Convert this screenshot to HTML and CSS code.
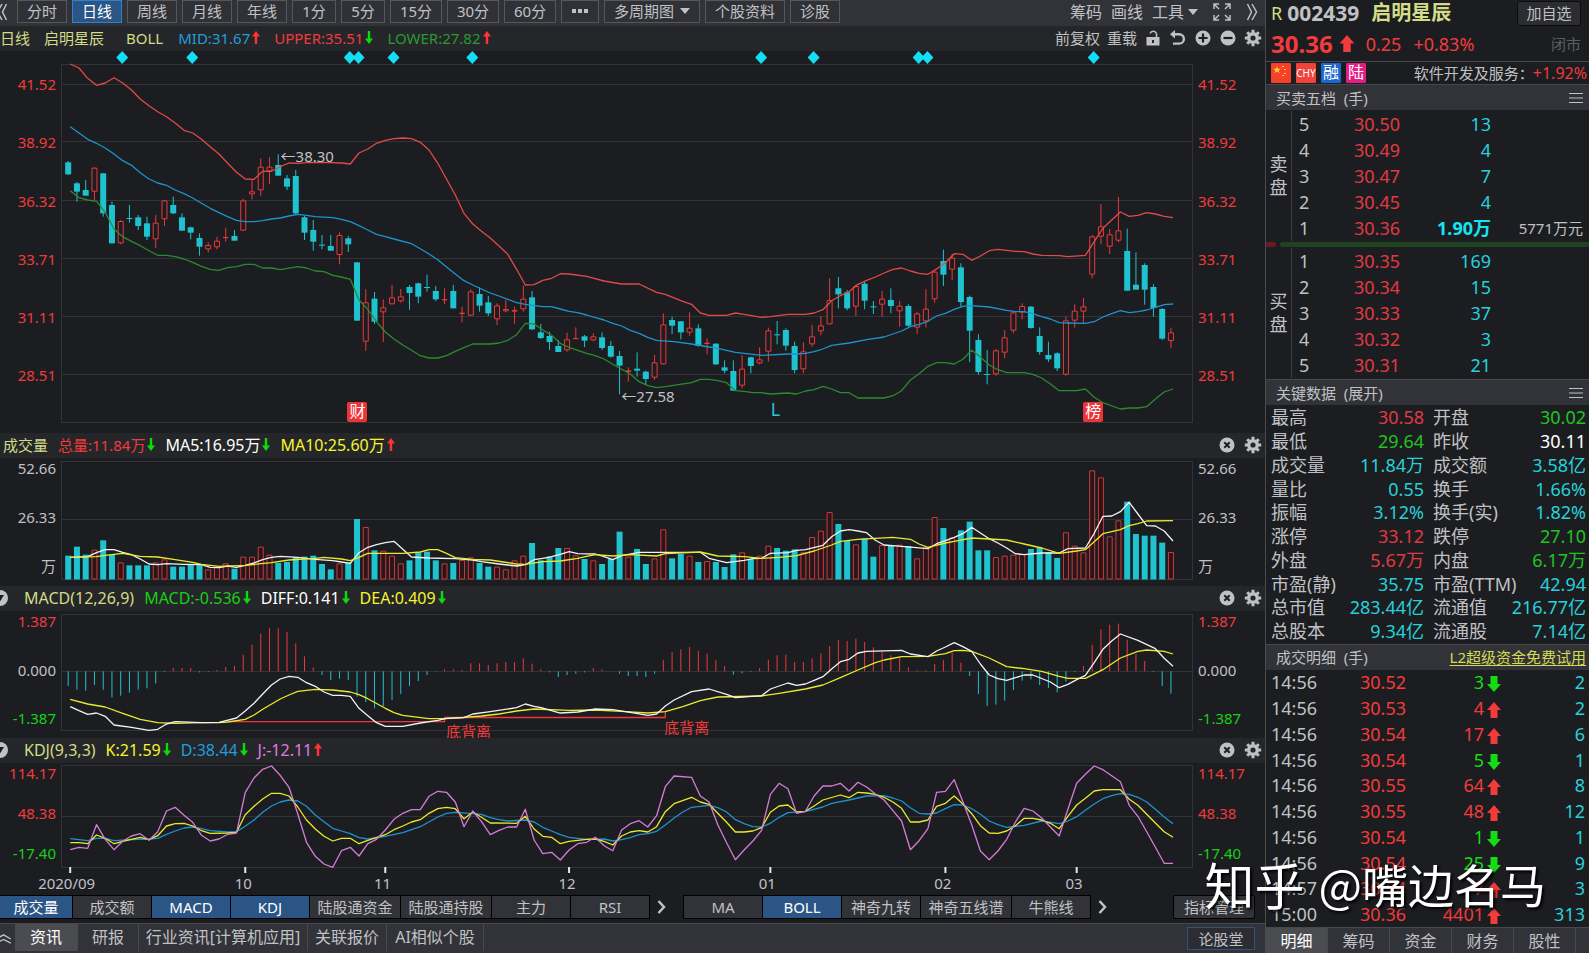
FILE: index.html
```html
<!DOCTYPE html>
<html lang="zh-CN">
<head>
<meta charset="utf-8">
<title>启明星辰 002439</title>
<link rel="stylesheet" href="styles.css">
</head>
<body>
<svg class="defs" aria-hidden="true">
  <symbol id="gear" viewBox="0 0 18 18"><circle cx="9" cy="9" r="4.3" fill="none" stroke="currentColor" stroke-width="3.4"/><path d="M9 .8v3M9 14.2v3M.8 9h3M14.2 9h3M3.2 3.2l2.1 2.1M12.7 12.7l2.1 2.1M3.2 14.8l2.1-2.1M12.7 5.3l2.1-2.1" stroke="currentColor" stroke-width="3"/></symbol>
  <symbol id="close" viewBox="0 0 18 18"><circle cx="9" cy="9" r="7.5" fill="currentColor"/><path d="M6.3 6.3l5.4 5.4M11.7 6.3l-5.4 5.4" stroke="#1c1d21" stroke-width="2"/></symbol>
  <symbol id="plus" viewBox="0 0 18 18"><circle cx="9" cy="9" r="7.5" fill="currentColor"/><path d="M9 4.5v9M4.5 9h9" stroke="#1c1d21" stroke-width="2.2"/></symbol>
  <symbol id="minus" viewBox="0 0 18 18"><circle cx="9" cy="9" r="7.5" fill="currentColor"/><path d="M4.5 9h9" stroke="#1c1d21" stroke-width="2.2"/></symbol>
  <symbol id="undo" viewBox="0 0 18 18"><path d="M3 5.2h7.2a4.7 4.7 0 0 1 0 9.4H4" fill="none" stroke="currentColor" stroke-width="2.4"/><path d="M1 5.2L6 1v8.4z" fill="currentColor"/></symbol>
  <symbol id="lock" viewBox="0 0 18 18"><path d="M2.500 8h13v8.500h-13zM8 11v3h2v-3z" fill="currentColor" fill-rule="evenodd"/><path d="M6 4.500a3.500 3.500 0 0 1 6.500 0V8" fill="none" stroke="currentColor" stroke-width="1.500"/></symbol>
  <symbol id="expand" viewBox="0 0 20 20"><path d="M2 7V2h5M13 2h5v5M2 13v5h5M13 18h5v-5M2 2l5 5M18 2l-5 5M2 18l5-5M18 18l-5-5" fill="none" stroke="currentColor" stroke-width="1.500"/></symbol>
  <symbol id="thin-up" viewBox="0 0 8 14"><path d="M4 0l4 5.500H5.200V13H2.800V5.500H0z" fill="currentColor"/></symbol>
  <symbol id="thin-down" viewBox="0 0 8 14"><path d="M4 13L0 7.500h2.800V0h2.400v7.500H8z" fill="currentColor"/></symbol>
  <symbol id="fat-up" viewBox="0 0 14 16"><path d="M7 0l7 8h-3.500v8h-7V8H0z" fill="currentColor"/></symbol>
  <symbol id="fat-down" viewBox="0 0 14 16"><path d="M7 16L0 8h3.500V0h7v8H14z" fill="currentColor"/></symbol>
  <symbol id="menu" viewBox="0 0 14 12"><path d="M0 1.500h14M0 6h14M0 10.500h14" stroke="currentColor" stroke-width="1.200"/></symbol>
  <symbol id="chev" viewBox="0 0 9 14"><path d="M1.500 1l5.500 6-5.500 6" fill="none" stroke="currentColor" stroke-width="2.500"/></symbol>
  <symbol id="dbl" viewBox="0 0 12 18"><path d="M1.500 1l4 8-4 8M6 1l4.500 8L6 17" fill="none" stroke="currentColor" stroke-width="1.500"/></symbol>
  <symbol id="fold" viewBox="0 0 18 18"><circle cx="9" cy="9" r="8" fill="currentColor"/><path d="M5 6h8l-4 6.500z" fill="#1c1d21"/></symbol>
</svg>

<div class="app">
<main class="main">
  <nav class="toolbar">
    <button class="plain first" aria-label="向左"><svg class="dbl back"><use href="#dbl"/></svg></button>
    <div class="periods">
      <button class="w50">分时</button><button class="w50 on">日线</button><button class="w50">周线</button><button class="w50">月线</button><button class="w50">年线</button><button class="w44">1分</button><button class="w44">5分</button><button class="w52">15分</button><button class="w52">30分</button><button class="w52">60分</button><button class="w38 dots" aria-label="更多"><i></i><i></i><i></i></button><button class="w96">多周期图<span class="tri"></span></button><button class="w80">个股资料</button><button class="w50">诊股</button>
    </div>
    <div class="tools">
      <button class="plain">筹码</button><button class="plain">画线</button><button class="plain">工具<span class="tri near"></span></button>
      <button class="plain wide" aria-label="全屏"><svg class="i20"><use href="#expand"/></svg></button>
      <button class="plain wide" aria-label="向右"><svg class="dbl"><use href="#dbl"/></svg></button>
    </div>
  </nav>

  <header class="bar">
    <div class="legend loose">
      <span class="name gap14">日线</span><span class="name gap22">启明星辰</span><span class="name gap15">BOLL</span>
      <span class="blue">MID:31.67</span><svg class="ar up"><use href="#thin-up"/></svg>
      <span class="red gap-l">UPPER:35.51</span><svg class="ar down"><use href="#thin-down"/></svg>
      <span class="dgreen gap-l">LOWER:27.82</span><svg class="ar up"><use href="#thin-up"/></svg>
    </div>
    <div class="acts">
      <button class="plain">前复权</button><button class="plain">重载</button>
      <button class="plain ic" aria-label="锁定"><svg class="i18"><use href="#lock"/></svg></button>
      <button class="plain ic" aria-label="撤销"><svg class="i18"><use href="#undo"/></svg></button>
      <button class="plain ic" aria-label="放大"><svg class="i18"><use href="#plus"/></svg></button>
      <button class="plain ic" aria-label="缩小"><svg class="i18"><use href="#minus"/></svg></button>
      <button class="plain ic" aria-label="设置"><svg class="i18"><use href="#gear"/></svg></button>
    </div>
  </header>
  <section class="pane price">
    <div class="axis left prices red"><span>41.52</span><span>38.92</span><span>36.32</span><span>33.71</span><span>31.11</span><span>28.51</span></div>
    <div class="plot">
      <svg id="price" viewBox="0 0 1132 382" preserveAspectRatio="none"></svg>
      <span class="note hi">←38.30</span><span class="note lo">←27.58</span>
      <span class="flag f1">财</span><span class="note mark-l">L</span><span class="flag f2">榜</span>
    </div>
    <div class="axis right prices red"><span>41.52</span><span>38.92</span><span>36.32</span><span>33.71</span><span>31.11</span><span>28.51</span></div>
  </section>

  <header class="bar">
    <div class="legend inset">
      <span class="name gap10">成交量</span>
      <span class="red">总量:11.84万</span><svg class="ar down"><use href="#thin-down"/></svg>
      <span class="white gap-l f16">MA5:16.95万</span><svg class="ar down"><use href="#thin-down"/></svg>
      <span class="yellow gap-l f16">MA10:25.60万</span><svg class="ar up"><use href="#thin-up"/></svg>
    </div>
    <div class="acts"><button class="plain ic" aria-label="关闭"><svg class="i18"><use href="#close"/></svg></button><button class="plain ic" aria-label="设置"><svg class="i18"><use href="#gear"/></svg></button></div>
  </header>
  <section class="pane vol">
    <div class="axis left"><span>52.66</span><span>26.33</span><span>万</span></div>
    <div class="plot"><svg id="vol" viewBox="0 0 1132 128" preserveAspectRatio="none"></svg></div>
    <div class="axis right"><span>52.66</span><span>26.33</span><span>万</span></div>
  </section>

  <header class="bar">
    <svg class="fold"><use href="#fold"/></svg>
    <div class="legend indent f16">
      <span class="name gap10">MACD(12,26,9)</span>
      <span class="green">MACD:-0.536</span><svg class="ar down"><use href="#thin-down"/></svg>
      <span class="white gap-l">DIFF:0.141</span><svg class="ar down"><use href="#thin-down"/></svg>
      <span class="yellow gap-l">DEA:0.409</span><svg class="ar down"><use href="#thin-down"/></svg>
    </div>
    <div class="acts"><button class="plain ic" aria-label="关闭"><svg class="i18"><use href="#close"/></svg></button><button class="plain ic" aria-label="设置"><svg class="i18"><use href="#gear"/></svg></button></div>
  </header>
  <section class="pane macd">
    <div class="axis left"><span class="red">1.387</span><span>0.000</span><span class="green">-1.387</span></div>
    <div class="plot"><svg id="macd" viewBox="0 0 1132 127" preserveAspectRatio="none"></svg>
      <span class="note div1">底背离</span><span class="note div2">底背离</span></div>
    <div class="axis right"><span class="red">1.387</span><span>0.000</span><span class="green">-1.387</span></div>
  </section>

  <header class="bar">
    <svg class="fold"><use href="#fold"/></svg>
    <div class="legend indent f16">
      <span class="name gap10">KDJ(9,3,3)</span>
      <span class="yellow">K:21.59</span><svg class="ar down"><use href="#thin-down"/></svg>
      <span class="blue gap-l">D:38.44</span><svg class="ar down"><use href="#thin-down"/></svg>
      <span class="pink gap-l">J:-12.11</span><svg class="ar up"><use href="#thin-up"/></svg>
    </div>
    <div class="acts"><button class="plain ic" aria-label="关闭"><svg class="i18"><use href="#close"/></svg></button><button class="plain ic" aria-label="设置"><svg class="i18"><use href="#gear"/></svg></button></div>
  </header>
  <section class="pane kdj">
    <div class="axis left"><span class="red">114.17</span><span class="red">48.38</span><span class="green">-17.40</span></div>
    <div class="plot"><svg id="kdj" viewBox="0 0 1132 110" preserveAspectRatio="none"></svg></div>
    <div class="axis right"><span class="red">114.17</span><span class="red">48.38</span><span class="green">-17.40</span></div>
  </section>
  <div class="pane dates"><div class="plot date-row">
    <span class="t0">2020/09</span><span class="t1">10</span><span class="t2">11</span><span class="t3">12</span><span class="t4">01</span><span class="t5">02</span><span class="t6">03</span>
  </div></div>

  <nav class="indicators">
    <div class="group">
      <button class="w72 on">成交量</button><button class="w78">成交额</button><button class="w78 on">MACD</button><button class="w78 on">KDJ</button><button class="w90">陆股通资金</button><button class="w90">陆股通持股</button><button class="w78">主力</button><button class="w78">RSI</button>
    </div>
    <button class="plain more" aria-label="更多指标"><svg class="chev"><use href="#chev"/></svg></button>
    <div class="group second">
      <button class="w78">MA</button><button class="w78 on">BOLL</button><button class="w78">神奇九转</button><button class="w90">神奇五线谱</button><button class="w78">牛熊线</button>
    </div>
    <button class="plain more" aria-label="更多主图指标"><svg class="chev"><use href="#chev"/></svg></button>
    <button class="manage">指标管理</button>
  </nav>
  <footer class="news">
    <button class="plain collapse" aria-label="展开"><svg class="dbl upward"><use href="#dbl"/></svg></button>
    <button class="tab on n63">资讯</button><button class="tab n61">研报</button><button class="tab n169">行业资讯[计算机应用]</button><button class="tab n79">关联报价</button><button class="tab n97">AI相似个股</button>
    <button class="forum">论股堂</button>
  </footer>
</main>

<aside class="side">
  <div class="title"><span class="r">R</span><b class="code">002439</b><b class="stock">启明星辰</b><button class="add">加自选</button></div>
  <div class="quote"><b>30.36</b><svg class="big"><use href="#fat-up"/></svg><span>0.25</span><span class="pct">+0.83%</span><em>闭市</em></div>
  <div class="tags">
    <svg class="cn" viewBox="0 0 20 20"><rect width="20" height="20" rx="1" fill="#f5402c"/><path d="M6 3l1 2.800h3L7.600 7.500l.9 2.800L6 8.600l-2.500 1.700.9-2.800L2 5.800h3z" fill="#ffd02e"/><path d="M11 3h2v1h-2zM13 6h2v1h-2zM13 10h2v1h-2zM11 12h2v1h-2z" fill="#ffd02e"/></svg>
    <span class="tag t-cny">CHY</span><span class="tag t-rong">融</span><span class="tag t-lu">陆</span>
    <span class="sector">软件开发及服务：</span><span class="red f16">+1.92%</span>
  </div>
  <h2 class="sec"><span>买卖五档&nbsp; (手)</span><svg class="menu"><use href="#menu"/></svg></h2>
  <div class="book asks">
    <div class="label">卖<br>盘</div>
    <table>
      <tr><td>5<td>30.50<td>13<td></tr><tr><td>4<td>30.49<td>4<td></tr><tr><td>3<td>30.47<td>7<td></tr><tr><td>2<td>30.45<td>4<td></tr><tr><td>1<td>30.36<td class="strong">1.90万<td>5771万元</tr>
    </table>
  </div>
  <div class="ratio"><i class="sell"></i><i class="buy"></i></div>
  <div class="book bids">
    <div class="label">买<br>盘</div>
    <table>
      <tr><td>1<td>30.35<td>169<td></tr><tr><td>2<td>30.34<td>15<td></tr><tr><td>3<td>30.33<td>37<td></tr><tr><td>4<td>30.32<td>3<td></tr><tr><td>5<td>30.31<td>21<td></tr>
    </table>
  </div>
  <h2 class="sec"><span>关键数据&nbsp; (展开)</span><svg class="menu"><use href="#menu"/></svg></h2>
  <dl class="keys">
    <div><dt>最高</dt><dd class="red">30.58</dd></div><div><dt>开盘</dt><dd class="green">30.02</dd></div>
    <div><dt>最低</dt><dd class="green">29.64</dd></div><div><dt>昨收</dt><dd class="white">30.11</dd></div>
    <div><dt>成交量</dt><dd>11.84万</dd></div><div><dt>成交额</dt><dd>3.58亿</dd></div>
    <div><dt>量比</dt><dd>0.55</dd></div><div><dt>换手</dt><dd>1.66%</dd></div>
    <div><dt>振幅</dt><dd>3.12%</dd></div><div><dt>换手(实)</dt><dd>1.82%</dd></div>
    <div><dt>涨停</dt><dd class="red">33.12</dd></div><div><dt>跌停</dt><dd class="green">27.10</dd></div>
    <div><dt>外盘</dt><dd class="red">5.67万</dd></div><div><dt>内盘</dt><dd class="green">6.17万</dd></div>
    <div><dt>市盈(静)</dt><dd>35.75</dd></div><div><dt>市盈(TTM)</dt><dd>42.94</dd></div>
    <div><dt>总市值</dt><dd>283.44亿</dd></div><div><dt>流通值</dt><dd>216.77亿</dd></div>
    <div><dt>总股本</dt><dd>9.34亿</dd></div><div><dt>流通股</dt><dd>7.14亿</dd></div>
  </dl>
  <h2 class="sec"><span>成交明细&nbsp; (手)</span><a href="#l2">L2超级资金免费试用</a></h2>
  <div class="deals"><table>
    <tr class="d"><td>14:56<td>30.52<td>3<svg><use href="#fat-down"/></svg><td>2</tr>
    <tr class="u"><td>14:56<td>30.53<td>4<svg><use href="#fat-up"/></svg><td>2</tr>
    <tr class="u"><td>14:56<td>30.54<td>17<svg><use href="#fat-up"/></svg><td>6</tr>
    <tr class="d"><td>14:56<td>30.54<td>5<svg><use href="#fat-down"/></svg><td>1</tr>
    <tr class="u"><td>14:56<td>30.55<td>64<svg><use href="#fat-up"/></svg><td>8</tr>
    <tr class="u"><td>14:56<td>30.55<td>48<svg><use href="#fat-up"/></svg><td>12</tr>
    <tr class="d"><td>14:56<td>30.54<td>1<svg><use href="#fat-down"/></svg><td>1</tr>
    <tr class="d"><td>14:56<td>30.54<td>25<svg><use href="#fat-down"/></svg><td>9</tr>
    <tr class="u"><td>14:57<td>30.54<td>7<svg><use href="#fat-up"/></svg><td>3</tr>
    <tr class="u"><td>15:00<td>30.36<td>4401<svg><use href="#fat-up"/></svg><td>313</tr>
  </table></div>
  <nav class="side-tabs"><button class="on">明细</button><button>筹码</button><button>资金</button><button>财务</button><button>股性</button></nav>
</aside>
</div>
<div class="watermark"><span class="zh">知乎</span><span>@嘴边名马</span></div>
<script src="chart.js"></script>
</body>
</html>
```
FILE: styles.css
```css
* { box-sizing: border-box; }
body { margin: 0; background: #1c1d21; color: #c0c1c4; font: 15px/20px "Noto Sans", "Noto Sans CJK SC", sans-serif; overflow: hidden; }
button { font: inherit; color: inherit; padding: 0; margin: 0; border: 0; background: none; white-space: nowrap; }
svg { display: block; flex: none; }
.defs { position: absolute; width: 0; height: 0; }
.app { display: grid; grid-template-columns: minmax(0, 1fr) 324px; height: 100vh; min-height: 800px; }
.main { display: flex; flex-direction: column; min-width: 0; overflow: hidden; }

.red { color: #ef3b3b; } .green { color: #17d017; } .dgreen { color: #2a9a2e; } .blue { color: #1e9fdc; }
.white { color: #fff; } .yellow { color: #f5f52a; } .pink { color: #e07be0; } .name { color: #d3dc86; }
.f16 { font-size: 16px; }

.toolbar { display: flex; flex: none; height: 26px; background: #323338; }
.first { width: 17px; height: 24px; }
.dbl { width: 12px; height: 18px; }
.back { transform: scaleX(-1); margin-left: -4px; }
.periods { display: flex; gap: 5px; height: 23px; }
.periods button { border: 1px solid #57585c; background: #303136; line-height: 20px; padding-bottom: 2px; display: flex; align-items: center; justify-content: center; }
.periods .on { background: #2a5585; border-color: #2c82cf; color: #fff; }
.w38 { width: 38px; } .w44 { width: 44px; } .w50 { width: 50px; } .w52 { width: 52px; } .w72 { width: 72px; } .w78 { width: 78px; } .w80 { width: 80px; } .w90 { width: 90px; } .w96 { width: 96px; }
.dots { gap: 2px; }
.dots i { width: 4px; height: 4px; background: #c0c1c4; }
.tri { display: inline-block; border: 5px solid transparent; border-top: 6px solid #c0c1c4; border-bottom: 0; margin-left: 6px; vertical-align: 3px; }
.near { margin-left: 4px; }
.tools { display: flex; align-items: center; gap: 9px; margin-left: auto; padding: 0 7px 2px 0; font-size: 16px; }
.wide { margin-left: 5px; }
.i20 { width: 20px; height: 20px; }
.i18 { width: 18px; height: 18px; }

.bar { display: flex; flex: none; align-items: center; height: 25px; padding-bottom: 2px; background: #25262a; position: relative; }
.legend { display: flex; align-items: center; white-space: nowrap; }
.inset { padding-left: 3px; }
.indent { padding-left: 24px; }
.gap10 { margin-right: 10px; } .gap14 { margin-right: 14px; } .gap15 { margin-right: 15px; } .gap22 { margin-right: 22px; }
.gap-l { margin-left: 10px; }
.loose .gap-l { margin-left: 14px; }
.ar { width: 8px; height: 14px; margin-left: 2px; }
.up { color: #f33; } .down { color: #0bdc0b; }
.fold { position: absolute; left: -9px; top: 3px; width: 18px; height: 18px; }
.acts { display: flex; align-items: center; gap: 8px; margin-left: auto; padding-right: 3px; }
.loose + .acts { gap: 7px; }

.pane { display: grid; grid-template-columns: 61px minmax(0, 1fr) 72px; min-height: 0; }
.price { flex: 382 1 0; } .vol { flex: 128 1 0; } .macd { flex: 127 1 0; } .kdj { flex: 110 1 0; }
.dates { flex: none; height: 22px; }
.plot { position: relative; min-height: 0; min-width: 0; }
.plot svg { position: absolute; width: 100%; height: 100%; }
.plot svg * { vector-effect: non-scaling-stroke; }
.axis { display: flex; flex-direction: column; justify-content: space-between; padding: 0 0 10px; min-height: 0; }
.axis.left { text-align: right; padding-right: 5px; }
.axis.right { padding-left: 5px; }
.axis.prices { display: grid; grid-template-columns: 1fr; grid-template-rows: repeat(6, 15.4%) 1fr; padding-top: 4px; padding-bottom: 0; align-items: center; }
.note { position: absolute; white-space: nowrap; }
.hi { left: 19.4%; top: 24.9%; } .lo { left: 49.5%; top: 87.6%; }
.flag { position: absolute; top: 91.9%; width: 20px; height: 20px; border-radius: 2px; background: #ee3338; color: #fff; text-align: center; font-size: 16px; line-height: 19px; }
.f1 { left: 25.3%; } .f2 { left: 90.3%; }
.mark-l { left: 62.7%; top: 91.2%; color: #21c8d5; font-size: 18px; }
.div1 { left: 34%; top: 86.6%; color: #ef3b3b; } .div2 { left: 53.3%; top: 83.5%; color: #ef3b3b; }
.date-row { grid-column: 2; }
.date-row span { position: absolute; top: 0; transform: translateX(-50%); }
.t0 { left: .5%; } .t1 { left: 16.1%; } .t2 { left: 28.4%; } .t3 { left: 44.7%; } .t4 { left: 62.4%; } .t5 { left: 77.9%; } .t6 { left: 89.5%; }

.frame { fill: none; stroke: #323337; } .grid { stroke: #323337; fill: none; }
.ln { fill: none; stroke-width: 1.3px; stroke-linejoin: round; }
.l-red { stroke: #e04a48; } .l-blue { stroke: #1d93cc; } .l-green { stroke: #2b8a2e; } .l-white { stroke: #f2f2f2; } .l-yellow { stroke: #eaea2c; } .l-pink { stroke: #d57cd8; }
.c-wick { stroke: #1fc2cf; } .r-wick { stroke: #e8393c; }
.c-body { fill: #1fc2cf; } .r-body { fill: #1c1d21; stroke: #e8393c; } .r-vol { fill: #2c1518; stroke: #c93a3e; }
.crisp { shape-rendering: crispEdges; }
.dia { fill: #12def5; }
.tick { stroke: #e8e8e8; stroke-width: 2px; }

.indicators { display: flex; flex: none; height: 28px; padding-bottom: 4px; }
.group { display: flex; gap: 1px; background: #000; border: solid #000; border-width: 1px 1px 1px 0; }
.group button { background: #323338; }
.group .on { background: #2a5585; color: #fff; }
.second { margin-left: 13px; border-left-width: 1px; }
.more { width: 20px; padding-left: 7px; }
.chev { width: 9px; height: 14px; }
.manage { margin-left: auto; margin-right: 10px; width: 82px; background: #323338; border: 1px solid #000; border-radius: 2px; }
.news { display: flex; flex: none; height: 30px; background: #323338; border-top: 1px solid #47484c; font-size: 16px; }
.collapse { width: 15px; }
.upward { transform: rotate(-90deg); margin-left: -2px; width: 11px; }
.tab { border-right: 1px solid #48494d; height: 27px; padding-bottom: 2px; }
.tab.on { background: #4b4c50; color: #fff; }
.n61 { width: 61px; } .n63 { width: 63px; } .n79 { width: 79px; } .n97 { width: 97px; } .n169 { width: 169px; }
.forum { margin: 3px 10px 3px auto; width: 68px; border: 1px solid #35537a; background: #2b2d33; font-size: 15px; }

.side { display: flex; flex-direction: column; border-left: 1px solid #4a4b4f; min-width: 0; overflow: hidden; font-size: 18px; }
.title { display: flex; align-items: center; height: 28px; flex: none; padding: 0 0 2px 5px; font-size: 20px; }
.r { color: #d3dc86; font-size: 18px; margin-right: 5px; }
.code { font-size: 21px; margin-right: 12px; } .stock { color: #d3dc86; }
.add { width: 64px; height: 25px; border: 1px solid #0c0c0e; border-radius: 3px; background: #2c2d31; font-size: 15px; margin: 0 8px 0 auto; }
.quote { display: flex; align-items: center; height: 33px; flex: none; padding: 0 8px 2px 5px; color: #f33b3b; }
.quote b { font-size: 24px; } .big { width: 16px; height: 17px; margin: 0 11px 0 6px; } .pct { margin-left: 12px; }
.quote em { margin-left: auto; color: #5d5e62; font-style: normal; font-size: 15px; }
.tags { display: flex; align-items: center; height: 23px; flex: none; border-top: 1px solid #47484c; padding: 0 2px 0 5px; font-size: 15px; gap: 5px; }
.cn, .tag { width: 20px; height: 20px; }
.tag { text-align: center; color: #fff; line-height: 19px; font-size: 16px; border-radius: 1px; }
.tag.t-cny { background: #f0443a; font-size: 10px; line-height: 20px; } .t-rong { background: #1c66d0; } .t-lu { background: #e51d85; }
.sector { margin-left: auto; margin-right: -6px; }
.sec { display: flex; align-items: center; justify-content: space-between; flex: none; height: 26px; margin: 0; padding: 0 3px 0 10px; background: #323338; border-top: 1px solid #47484c; font-size: 15px; font-weight: 400; }
.sec a { color: #d3dc50; text-underline-offset: 2px; }
.menu { width: 14px; height: 12px; margin-right: 3px; }
.book { display: flex; flex: none; }
.asks { padding-top: 1px; } .bids { padding-bottom: 1px; }
.label { width: 26px; flex: none; border-right: 1px solid #3c3d41; display: flex; align-items: center; justify-content: center; line-height: 23px; }
table { border-collapse: collapse; table-layout: fixed; width: 100%; }
td { padding: 0; text-align: right; }
.book td { height: 26px; line-height: 26px; }
.book td:nth-child(1) { width: 30px; text-align: left; padding-left: 7px; }
.book td:nth-child(2) { width: 78px; color: #e03a42; }
.book td:nth-child(3) { width: 91px; color: #27d0da; }
.book td:nth-child(4) { padding-right: 6px; font-size: 15px; line-height: 20px; white-space: nowrap; }
.book td.strong { font-weight: 700; color: #12e6f2; }
.ratio { display: flex; gap: 4px; flex: none; height: 7px; padding: 1px 0; }
.sell { width: 10px; background: #6e1a20; border-radius: 0 3px 3px 0; } .buy { flex: 1; background: #1f4320; border-radius: 3px 0 0 3px; }
.keys { flex: 238 1 0; min-height: 0; display: grid; grid-template-columns: 1fr 1fr; grid-auto-rows: 1fr; column-gap: 9px; margin: 0; padding: 1px 3px 0 5px; line-height: 23px; }
.keys div { display: flex; justify-content: space-between; align-items: center; white-space: nowrap; min-width: 0; }
dd { margin: 0; color: #27d0da; } dd.red { color: #e03a42; } dd.green { color: #1fc51f; } dd.white { color: #fff; }
.deals { flex: 258 1 0; min-height: 0; }
.deals table { height: 100%; line-height: 24px; }
.deals td:nth-child(1) { width: 78px; text-align: left; padding-left: 5px; }
.deals td:nth-child(2) { width: 62px; color: #f33b3b; }
.deals td:nth-child(3) { width: 95px; }
.deals td:nth-child(4) { color: #27d0da; padding-right: 4px; }
.deals svg { display: inline-block; width: 14px; height: 16px; margin-left: 3px; vertical-align: -3px; }
.u td:nth-child(3) { color: #f33b3b; } .d td:nth-child(3) { color: #15dc15; }
.side-tabs { display: flex; flex: none; height: 26px; background: #323338; border-top: 1px solid #47484c; font-size: 16px; }
.side-tabs button { width: 62px; border-right: 1px solid #48494d; }
.side-tabs .on { background: #4b4c50; color: #fff; }

.watermark { position: fixed; right: 43px; bottom: 38px; display: flex; align-items: center; gap: 14px; color: #fff; font: 46px/64px "Noto Sans CJK SC", sans-serif; text-shadow: 2px 2px 3px #000; pointer-events: none; }
.zh { font-size: 50px; }
```
FILE: chart.js
```js
// Heights are stored in thirds of a pixel, one entry per trading day.
const STEP = 8.752, X0 = 7.2, NS = 'http://www.w3.org/2000/svg';
const cx = i => X0 + STEP * i;

function add(svg, tag, cls, attrs) {
  const el = document.createElementNS(NS, tag);
  el.setAttribute('class', cls);
  for (const k in attrs) el.setAttribute(k, attrs[k]);
  svg.appendChild(el);
}
function hline(svg, y) { add(svg, 'path', 'grid crisp', { d: `M0 ${y}H1132` }); }
function frame(svg, top, bottom) { add(svg, 'rect', 'frame crisp', { x: 0.5, y: top, width: 1131, height: bottom - top }); }
function curve(svg, cls, text, off) {
  const pts = text.trim().split(/\s+/).map(p => {
    const [i, v] = p.split(':').map(Number);
    return (cx(i) + 2).toFixed(1) + ',' + (v / 3 - off).toFixed(1);
  });
  add(svg, 'polyline', 'ln ' + cls, { points: pts.join(' ') });
}

// kind, high, body top, body bottom, low
const candles = `c 483 487 523 525|c 546 550 575 605|c 540 570 587 587|r 502 503 575 600|c 520 520 640 650|c 605 615 730 730|r 660 663 730 733|c 615 654 657 668|c 645 652 678 690|c 650 670 710 720|r 645 668 718 744|r 600 601 658 678|c 590 615 640 642|c 640 652 692 692|c 680 682 698 718|c 700 714 740 767|r 727 735 748 757|r 710 722 742 748|r 683 711 713 725|c 690 708 722 722|r 597 601 692 692|r 540 574 583 598|r 475 500 571 587|r 472 500 514 552|c 463 495 527 527|c 525 535 560 570|c 510 528 640 645|c 648 652 698 720|c 660 690 725 752|c 705 734 737 748|c 705 738 752 752|r 697 705 765 793|c 708 715 733 756|c 787 787 962 962|r 868 907 1025 1052|c 876 896 965 972|r 898 922 937 1026|r 855 892 913 913|r 867 889 904 908|c 855 861 879 929|c 848 850 890 910|c 824 861 864 875|c 858 873 898 903|r 865 897 901 912|c 855 873 925 925|r 920 938 942 967|r 868 874 947 947|c 863 882 917 935|c 888 907 940 948|r 910 916 958 975|r 900 927 934 937|r 920 930 935 971|r 857 896 928 935|c 873 892 988 990|c 972 997 1014 1017|c 995 1008 1026 1050|c 1020 1038 1056 1056|r 998 1018 1051 1055|r 982 1014 1016 1016|c 1005 1009 1022 1041|r 1000 1009 1021 1024|c 997 1012 1044 1050|c 1023 1038 1070 1073|c 1053 1068 1097 1183|r 1102 1111 1116 1145|c 1057 1106 1112 1130|c 1112 1115 1137 1153|r 1065 1087 1133 1140|r 940 973 1093 1093|c 950 960 977 1002|c 963 964 997 1018|r 937 983 998 1007|c 973 985 1038 1040|r 1015 1028 1032 1063|c 1030 1031 1093 1095|c 1081 1102 1112 1120|c 1081 1113 1172 1172|r 1065 1106 1157 1165|c 1070 1072 1098 1120|r 1042 1078 1090 1093|r 983 991 1055 1085|c 963 1003 1006 1033|c 985 990 1037 1052|c 1025 1038 1110 1120|r 1027 1054 1108 1120|r 975 1009 1033 1040|r 948 976 994 1006|r 835 900 973 973|c 831 865 883 925|c 870 877 925 931|r 853 858 920 948|c 845 851 902 928|c 903 919 922 942|r 873 896 914 950|c 865 900 918 940|r 903 917 934 980|c 913 918 977 980|r 935 940 983 1002|r 868 926 964 983|r 808 815 898 908|c 749 783 824 858|r 762 773 809 841|c 790 802 906 920|c 887 891 992 1086|c 1003 1020 1116 1124|c 1050 1122 1125 1153|r 1047 1051 1123 1127|r 990 1012 1058 1075|r 935 937 992 1000|r 910 918 938 958|c 918 920 984 986|c 982 1008 1056 1064|c 1025 1065 1078 1086|c 1057 1060 1105 1113|r 950 961 1124 1127|r 913 932 962 983|r 894 919 935 972|r 705 709 824 835|r 612 679 710 733|r 687 703 740 762|r 591 691 722 727|c 686 753 872 872|c 757 854 869 869|c 790 795 869 914|c 853 861 924 950|c 924 927 1016 1020|r 983 997 1023 1045`
  .split('|').map(s => { const a = s.split(' '); return [a[0], ...a.slice(1).map(Number)]; });

const price = document.getElementById('price');
frame(price, 13.5, 371.5);
[33.5, 90.5, 149.5, 207.5, 265.5, 323.5].forEach(y => hline(price, y));
candles.forEach(([k, hi, top, bot, lo], i) => {
  const x = cx(i), y = v => v / 3 - 51;
  add(price, 'path', k + '-wick', { d: `M${x} ${y(hi)}V${y(lo)}` });
  if (k === 'c') add(price, 'rect', 'c-body', { x: x - 3, y: y(top), width: 6, height: Math.max(1, y(bot) - y(top)) });
  else add(price, 'rect', 'r-body', { x: x - 2.5, y: y(top) + 0.5, width: 5, height: Math.max(0.2, y(bot) - y(top) - 1) });
});
curve(price, 'l-red', `0:192 1:204 2:235 3:256 4:249 5:233 6:249 7:270 8:297 9:317 10:335 11:350 12:369 13:391 14:399 15:418 16:440 17:462 18:490 19:517 20:537 21:538 22:514 23:514 24:500 25:489 26:490 27:488 29:487 31:489 32:492 33:459 34:447 35:430 36:421 37:416 38:414 39:416 40:427 41:450 42:490 43:537 44:585 45:640 46:672 47:694 48:714 49:738 50:763 51:808 52:855 53:854 54:841 55:835 56:821 57:822 59:829 61:843 63:852 65:852 67:877 68:883 70:904 71:913 72:939 73:946 75:946 76:939 77:943 79:952 80:950 82:943 84:943 85:939 86:929 87:902 88:887 89:875 90:853 91:841 92:831 93:819 94:808 95:804 96:813 97:820 98:823 99:807 100:788 101:761 102:763 103:781 104:768 105:752 106:748 108:754 109:755 110:762 111:766 113:767 114:770 116:766 117:725 118:685 119:660 120:636 121:649 122:646 123:638 124:642 125:649 126:653`, 51);
curve(price, 'l-blue', `0:380 1:399 2:418 3:430 4:444 5:462 6:482 7:496 8:518 9:537 10:549 11:556 12:570 13:581 14:594 15:610 16:625 17:638 18:650 19:661 20:665 21:665 22:662 23:657 24:654 25:648 26:643 27:646 28:650 30:653 31:658 32:665 33:677 34:690 35:703 36:710 37:717 39:731 40:746 41:762 42:779 43:801 44:822 45:842 46:855 47:867 48:879 49:888 50:898 51:908 52:913 54:920 55:920 56:927 57:934 58:938 59:945 60:953 61:960 62:970 63:978 64:991 65:1000 66:1012 67:1021 69:1025 71:1032 73:1041 74:1045 76:1057 78:1063 79:1066 82:1062 83:1062 84:1060 85:1055 86:1047 87:1036 89:1029 91:1019 93:1011 95:993 96:980 97:973 98:964 99:948 100:940 101:928 102:919 103:917 105:921 107:931 108:935 109:935 110:941 111:950 112:957 113:968 114:969 116:970 117:965 118:951 119:941 120:932 121:938 122:935 123:930 124:922 125:914 126:912`, 51);
curve(price, 'l-green', `0:572 1:593 2:600 3:604 4:637 5:687 6:710 7:724 8:737 9:752 10:766 11:766 12:770 13:777 14:787 15:799 16:808 17:811 18:803 19:800 20:793 21:793 22:804 23:804 24:809 26:800 27:804 28:813 29:815 30:826 31:831 32:838 33:900 34:928 35:965 36:996 37:1017 38:1035 39:1051 40:1067 41:1074 42:1074 43:1067 44:1054 45:1043 46:1032 48:1032 49:1029 50:1021 51:1004 52:970 53:972 54:990 55:1006 56:1030 57:1042 58:1051 59:1060 60:1067 61:1077 62:1093 63:1108 64:1122 65:1145 66:1157 67:1163 68:1160 71:1148 72:1138 73:1138 74:1142 75:1148 76:1172 77:1174 78:1178 79:1178 80:1182 82:1179 83:1182 84:1173 85:1169 86:1159 87:1167 88:1178 89:1178 90:1194 93:1194 94:1187 95:1172 96:1140 97:1121 98:1099 99:1088 100:1088 101:1092 102:1078 103:1051 104:1071 105:1095 106:1109 107:1118 109:1118 110:1123 111:1134 112:1152 113:1172 115:1172 116:1167 117:1192 118:1208 120:1227 121:1224 122:1224 123:1220 124:1197 125:1176 126:1167`, 51);
[6, 14, 32, 33, 37, 46, 79, 85, 97, 98, 117].forEach(i =>
  add(price, 'path', 'dia', { d: `M${cx(i) + 1.5} 0l6 6.500-6 6.500-6-6.500z` }));

const vol = document.getElementById('vol');
frame(vol, 3.5, 121);
hline(vol, 61.5);
const volumes = [377,350,374,359,331,374,397,406,406,406,397,388,410,410,402,402,418,410,400,416,380,380,350,374,399,396,382,380,377,402,418,400,397,267,291,361,362,377,400,391,368,365,391,400,399,390,382,399,410,410,418,391,377,339,391,380,354,354,376,387,391,402,387,305,380,357,402,385,298,385,372,377,396,393,396,411,373,367,387,377,347,354,362,358,367,321,302,246,282,333,343,325,380,345,347,344,348,385,352,261,294,322,301,275,361,361,381,377,374,372,357,352,366,384,307,347,367,121,142,319,271,215,312,317,317,338,366];
volumes.forEach((v, i) => {
  const y = v / 3 - 28, h = 121.5 - y;
  if (candles[i][0] === 'c') add(vol, 'rect', 'c-body', { x: cx(i) - 3, y, width: 6, height: h });
  else add(vol, 'rect', 'r-vol', { x: cx(i) - 2.5, y: y + 0.5, width: 5, height: h - 1 });
});
curve(vol, 'l-white', `0:382 2:380 3:368 4:359 5:359 6:367 7:374 8:387 9:402 10:404 11:401 13:403 15:404 16:412 17:413 18:408 19:412 20:406 21:399 22:389 23:382 24:379 26:382 28:388 30:392 31:396 32:400 33:368 34:352 35:344 36:338 37:334 38:358 39:381 41:384 44:386 46:390 47:395 49:402 50:405 51:408 52:404 53:389 54:385 55:380 56:373 57:365 58:371 60:372 61:380 62:389 63:377 65:367 72:367 73:385 75:398 77:391 78:386 79:385 80:370 82:368 83:361 84:359 86:346 87:320 88:303 89:299 90:303 91:308 92:331 93:345 95:349 98:356 99:341 100:332 101:322 102:311 103:292 104:309 105:326 106:339 107:354 108:371 109:374 111:369 113:369 114:356 116:354 117:310 118:259 119:258 120:245 121:217 122:252 123:287 124:288 125:303 126:333`, 28);
curve(vol, 'l-yellow', `0:382 3:380 4:376 6:370 8:379 10:381 12:389 14:397 15:403 17:409 20:406 23:398 25:390 28:385 29:382 31:387 32:392 33:382 34:370 38:370 40:366 41:359 42:359 43:370 44:383 46:388 48:390 51:402 52:403 54:395 56:393 58:385 59:379 60:374 62:378 64:374 67:378 68:371 72:366 74:378 77:380 79:385 81:382 83:377 85:363 87:345 88:334 90:328 94:322 96:328 97:342 98:352 100:339 101:334 103:324 107:330 109:342 111:354 113:370 115:363 116:359 117:335 118:311 120:299 121:287 122:281 123:273 126:272`, 28);

const macd = document.getElementById('macd');
frame(macd, 3.5, 119.5);
hline(macd, 60.5);
const hist = [768,779,782,765,779,802,797,788,779,775,760,726,714,714,714,727,726,720,711,708,674,644,611,594,594,606,640,679,712,735,750,746,750,800,816,835,828,810,792,768,753,735,725,718,718,720,700,700,705,700,696,696,685,701,718,727,741,735,731,727,714,718,724,731,738,738,741,731,690,666,658,651,662,671,690,708,734,730,726,714,689,676,674,696,696,685,670,648,630,633,626,636,652,664,676,682,712,721,721,702,690,668,698,738,792,828,824,812,780,752,748,765,774,787,755,726,708,645,598,584,581,629,672,693,726,768,791];
hist.forEach((v, i) => add(macd, 'path', v < 724 ? 'r-wick' : 'c-wick', { d: `M${cx(i)} 60.3V${v / 3 - 181}` }));
add(macd, 'path', 'ln r-wick', { d: `M${cx(18.5)} 110.7H${cx(43)}V106.500H${cx(68) + 2}V101` });
curve(macd, 'l-yellow', `0:808 2:822 4:831 6:850 8:868 10:878 12:880 15:878 17:878 18:876 20:868 21:855 22:838 24:807 25:795 26:784 28:778 30:780 32:786 33:794 34:806 36:835 37:848 38:856 41:866 43:866 45:862 47:858 49:852 51:843 53:837 57:841 60:840 63:844 66:849 68:845 70:830 72:812 74:801 79:798 81:790 84:777 86:765 88:743 90:720 92:698 93:690 95:680 98:679 100:671 101:662 102:661 103:664 105:684 107:710 109:716 111:724 113:739 114:745 116:745 118:719 120:684 122:664 123:660 125:664 126:672`, 181);
curve(macd, 'l-white', `0:830 1:842 2:853 3:849 4:859 5:885 7:892 9:901 10:898 11:882 12:875 15:878 17:877 19:864 20:843 21:820 22:792 23:765 24:747 25:739 26:742 27:758 28:769 29:786 30:796 31:796 32:799 33:835 34:857 35:878 36:889 38:889 40:879 42:871 43:865 45:863 46:852 48:845 51:833 52:822 53:829 54:834 56:849 58:846 60:837 62:839 64:847 66:856 67:852 68:828 69:810 71:785 73:777 75:793 76:803 79:797 80:777 82:759 83:766 84:762 85:751 86:740 87:717 88:695 89:688 90:669 91:664 95:661 96:672 98:680 99:663 100:651 101:638 102:650 103:664 104:702 105:735 106:746 107:751 108:743 109:735 110:735 112:756 113:773 114:763 115:749 116:736 117:698 118:658 119:633 120:612 122:631 124:656 125:685 126:709`, 181);

const kdj = document.getElementById('kdj');
frame(kdj, 2.5, 104);
hline(kdj, 53.5);
curve(kdj, 'l-blue', `0:326 2:332 3:325 4:325 5:332 7:329 9:327 10:325 11:313 12:303 13:294 14:291 15:296 16:302 18:306 19:305 20:289 21:270 22:247 23:228 24:216 25:210 26:213 27:229 28:255 29:275 30:295 31:303 32:311 33:323 34:327 36:319 38:308 40:290 42:261 43:250 44:247 46:251 47:253 48:263 49:269 50:273 52:270 53:276 54:292 55:303 56:314 57:322 59:328 61:327 62:333 63:329 64:323 65:314 66:311 67:304 68:285 69:264 70:246 71:232 73:226 74:233 75:246 76:269 77:281 78:290 79:291 80:280 81:262 82:248 84:245 86:231 87:220 89:210 91:198 93:197 94:204 95:213 96:233 97:250 98:252 99:249 100:236 101:224 102:225 103:236 104:253 105:273 106:284 107:292 109:286 111:273 113:281 114:273 115:260 116:241 117:222 118:206 119:197 120:191 121:193 122:202 123:216 124:238 125:261 126:281`, 33);
curve(kdj, 'l-yellow', `0:338 1:338 2:341 3:315 4:325 5:341 6:334 8:322 9:329 10:317 11:288 12:281 13:280 14:288 15:302 16:310 18:309 19:307 20:254 21:229 22:207 23:190 24:190 25:198 26:231 27:270 28:297 29:319 30:333 31:325 32:325 33:341 34:331 36:314 37:299 38:288 39:276 40:269 41:250 42:236 43:232 44:236 45:266 46:246 47:262 48:279 51:280 52:259 53:297 54:319 55:322 56:341 57:334 59:328 60:327 61:334 62:345 63:318 64:306 65:302 66:306 67:290 68:245 69:221 71:202 72:216 73:223 74:250 75:277 76:306 77:306 78:303 79:293 80:247 81:228 82:225 83:246 84:244 85:228 86:210 88:195 89:203 90:187 91:189 92:193 93:202 94:216 95:235 96:276 97:276 98:270 99:229 100:220 101:198 102:222 103:251 104:287 105:309 106:310 107:303 108:287 109:265 110:265 111:270 112:280 113:296 114:259 115:225 116:205 117:183 118:179 120:179 121:208 122:226 123:253 124:279 125:305 126:322`, 33);
curve(kdj, 'l-pink', `0:359 1:352 2:355 3:284 4:328 5:359 6:334 7:318 8:311 9:331 10:305 11:243 12:232 13:256 14:277 15:316 16:333 17:327 18:313 19:309 20:188 21:144 22:118 23:108 24:136 25:172 26:252 27:337 28:379 29:402 30:412 31:362 32:352 33:378 34:341 35:328 36:300 37:268 38:250 39:239 40:239 41:199 42:184 43:187 44:216 45:290 46:243 47:275 48:314 49:301 50:291 51:291 52:238 53:330 54:371 55:367 56:390 57:360 58:341 59:337 60:322 61:347 62:362 63:300 64:281 65:272 66:291 67:257 68:170 69:138 71:142 72:198 73:216 74:284 75:338 76:389 77:360 78:333 79:301 80:193 81:160 82:176 83:250 84:244 85:198 86:168 87:168 88:160 89:183 90:157 91:171 92:192 93:210 94:242 95:273 96:359 97:332 98:296 99:187 100:184 101:149 102:215 103:284 104:363 105:389 106:363 107:328 108:276 109:235 110:243 111:264 112:291 113:318 114:238 115:160 116:133 117:108 118:119 119:137 120:155 121:226 122:259 123:305 124:352 125:400 126:400`, 33);
[0, 20, 36, 57, 80, 100, 115].forEach(i => add(kdj, 'path', 'tick', { d: `M${cx(i) + 2} 104v6` }));
```
